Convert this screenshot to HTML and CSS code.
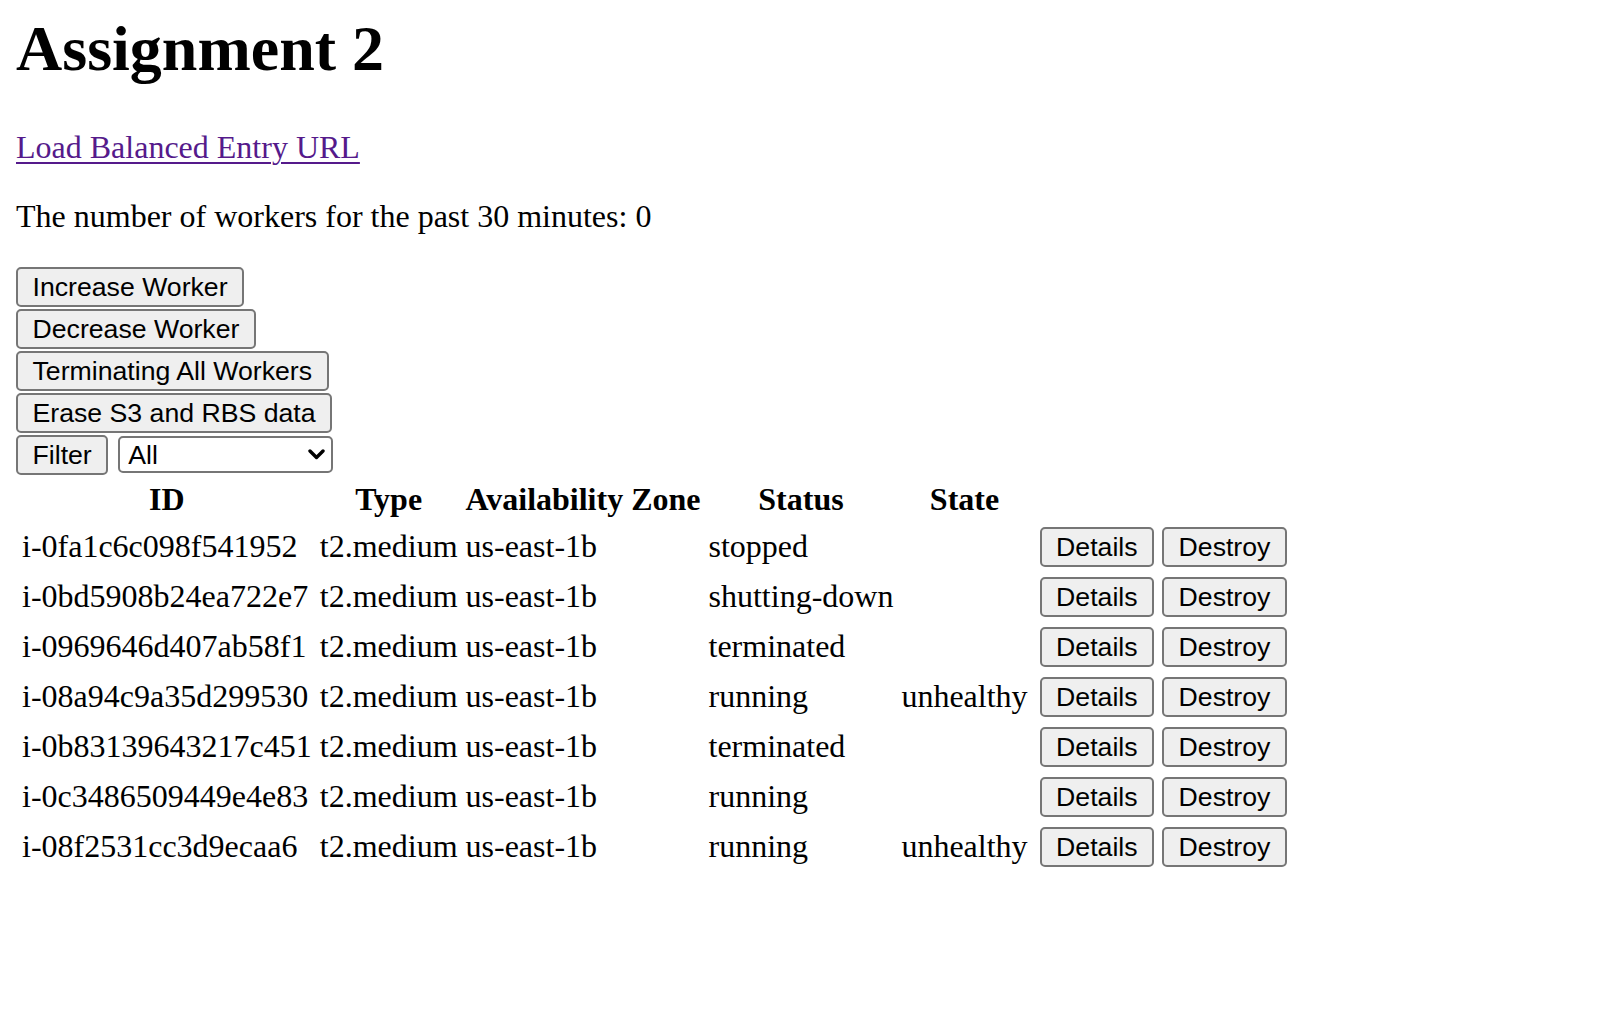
FILE: index.html
```html
<!DOCTYPE html>
<html lang="en">
<head>
<meta charset="utf-8">
<title>Assignment 2</title>
<link rel="stylesheet" href="styles.css">
</head>
<body>
<div class="page">
  <h1 class="title">Assignment 2</h1>
  <p class="para"><a class="entry-link" href="#">Load Balanced Entry URL</a></p>
  <p class="para">The number of workers for the past 30 minutes: 0</p>

  <div class="actions">
    <form class="action-row"><button class="btn" type="button">Increase Worker</button></form>
    <form class="action-row"><button class="btn" type="button">Decrease Worker</button></form>
    <form class="action-row"><button class="btn" type="button">Terminating All Workers</button></form>
    <form class="action-row"><button class="btn" type="button">Erase S3 and RBS data</button></form>
    <form class="action-row filter-row">
      <button class="btn" type="button">Filter</button>
      <span class="select-wrap">
        <select class="filter-select">
          <option>All</option>
          <option>running</option>
          <option>stopped</option>
          <option>terminated</option>
        </select>
        <svg class="chevron" width="17" height="11" viewBox="0 0 17 11" aria-hidden="true"><path d="M2 2 L8.5 8.5 L15 2" fill="none" stroke="#000" stroke-width="3.4" stroke-linecap="round" stroke-linejoin="round"/></svg>
      </span>
    </form>
  </div>

  <table class="workers">
    <thead>
      <tr><th>ID</th><th>Type</th><th>Availability Zone</th><th>Status</th><th>State</th><th></th><th></th></tr>
    </thead>
    <tbody>
      <tr><td>i-0fa1c6c098f541952</td><td>t2.medium</td><td>us-east-1b</td><td>stopped</td><td></td><td class="first-btn"><button class="btn" type="button">Details</button></td><td><button class="btn" type="button">Destroy</button></td></tr>
      <tr><td>i-0bd5908b24ea722e7</td><td>t2.medium</td><td>us-east-1b</td><td>shutting-down</td><td></td><td class="first-btn"><button class="btn" type="button">Details</button></td><td><button class="btn" type="button">Destroy</button></td></tr>
      <tr><td>i-0969646d407ab58f1</td><td>t2.medium</td><td>us-east-1b</td><td>terminated</td><td></td><td class="first-btn"><button class="btn" type="button">Details</button></td><td><button class="btn" type="button">Destroy</button></td></tr>
      <tr><td>i-08a94c9a35d299530</td><td>t2.medium</td><td>us-east-1b</td><td>running</td><td>unhealthy</td><td class="first-btn"><button class="btn" type="button">Details</button></td><td><button class="btn" type="button">Destroy</button></td></tr>
      <tr><td>i-0b83139643217c451</td><td>t2.medium</td><td>us-east-1b</td><td>terminated</td><td></td><td class="first-btn"><button class="btn" type="button">Details</button></td><td><button class="btn" type="button">Destroy</button></td></tr>
      <tr><td>i-0c3486509449e4e83</td><td>t2.medium</td><td>us-east-1b</td><td>running</td><td></td><td class="first-btn"><button class="btn" type="button">Details</button></td><td><button class="btn" type="button">Destroy</button></td></tr>
      <tr><td>i-08f2531cc3d9ecaa6</td><td>t2.medium</td><td>us-east-1b</td><td>running</td><td>unhealthy</td><td class="first-btn"><button class="btn" type="button">Details</button></td><td><button class="btn" type="button">Destroy</button></td></tr>
    </tbody>
  </table>
</div>
</body>
</html>
```

FILE: styles.css
```css
html, body {
  margin: 0;
  padding: 0;
  background: #ffffff;
}

body {
  font-family: "Liberation Serif", "Times New Roman", serif;
  font-size: 32px;
  line-height: 37px;
  color: #000000;
}

.page {
  padding: 0 16px;
}

.title {
  font-size: 64px;
  line-height: 73.5px;
  font-weight: 700;
  margin: 12px 0 43px 0;
}

.para {
  margin: 32px 0;
}

.title + .para {
  margin-top: 0;
}

.entry-link {
  color: #551a8b;
  text-decoration: underline;
  text-decoration-thickness: 2px;
  text-underline-offset: 4px;
}

.actions {
  display: flex;
  flex-direction: column;
  align-items: flex-start;
  gap: 2px;
}

.action-row {
  margin: 0;
  display: flex;
  align-items: center;
}

.filter-row {
  gap: 10px;
}

.btn {
  font-family: "Liberation Sans", Arial, sans-serif;
  font-size: 26.67px;
  line-height: 36px;
  height: 40px;
  padding: 0 14.5px;
  margin: 0;
  color: #000000;
  background: #efefef;
  border: 2px solid #767676;
  border-radius: 5px;
  box-sizing: border-box;
  cursor: default;
}

.select-wrap {
  position: relative;
  display: inline-block;
}

.filter-select {
  appearance: none;
  -webkit-appearance: none;
  font-family: "Liberation Sans", Arial, sans-serif;
  font-size: 26.67px;
  width: 215px;
  height: 37px;
  box-sizing: border-box;
  padding: 0 34px 0 8px;
  margin: 0;
  color: #000000;
  background: #ffffff;
  border: 2px solid #767676;
  border-radius: 5px;
  display: block;
}

.chevron {
  position: absolute;
  right: 8px;
  top: 13px;
  pointer-events: none;
}

.workers {
  border-spacing: 4px;
  margin-left: 0;
}

.workers th {
  font-weight: 700;
  text-align: center;
  padding: 2px;
}

.workers td {
  padding: 3px 2px;
  text-align: left;
  white-space: nowrap;
}

.workers td.first-btn {
  padding-left: 6px;
}
```
